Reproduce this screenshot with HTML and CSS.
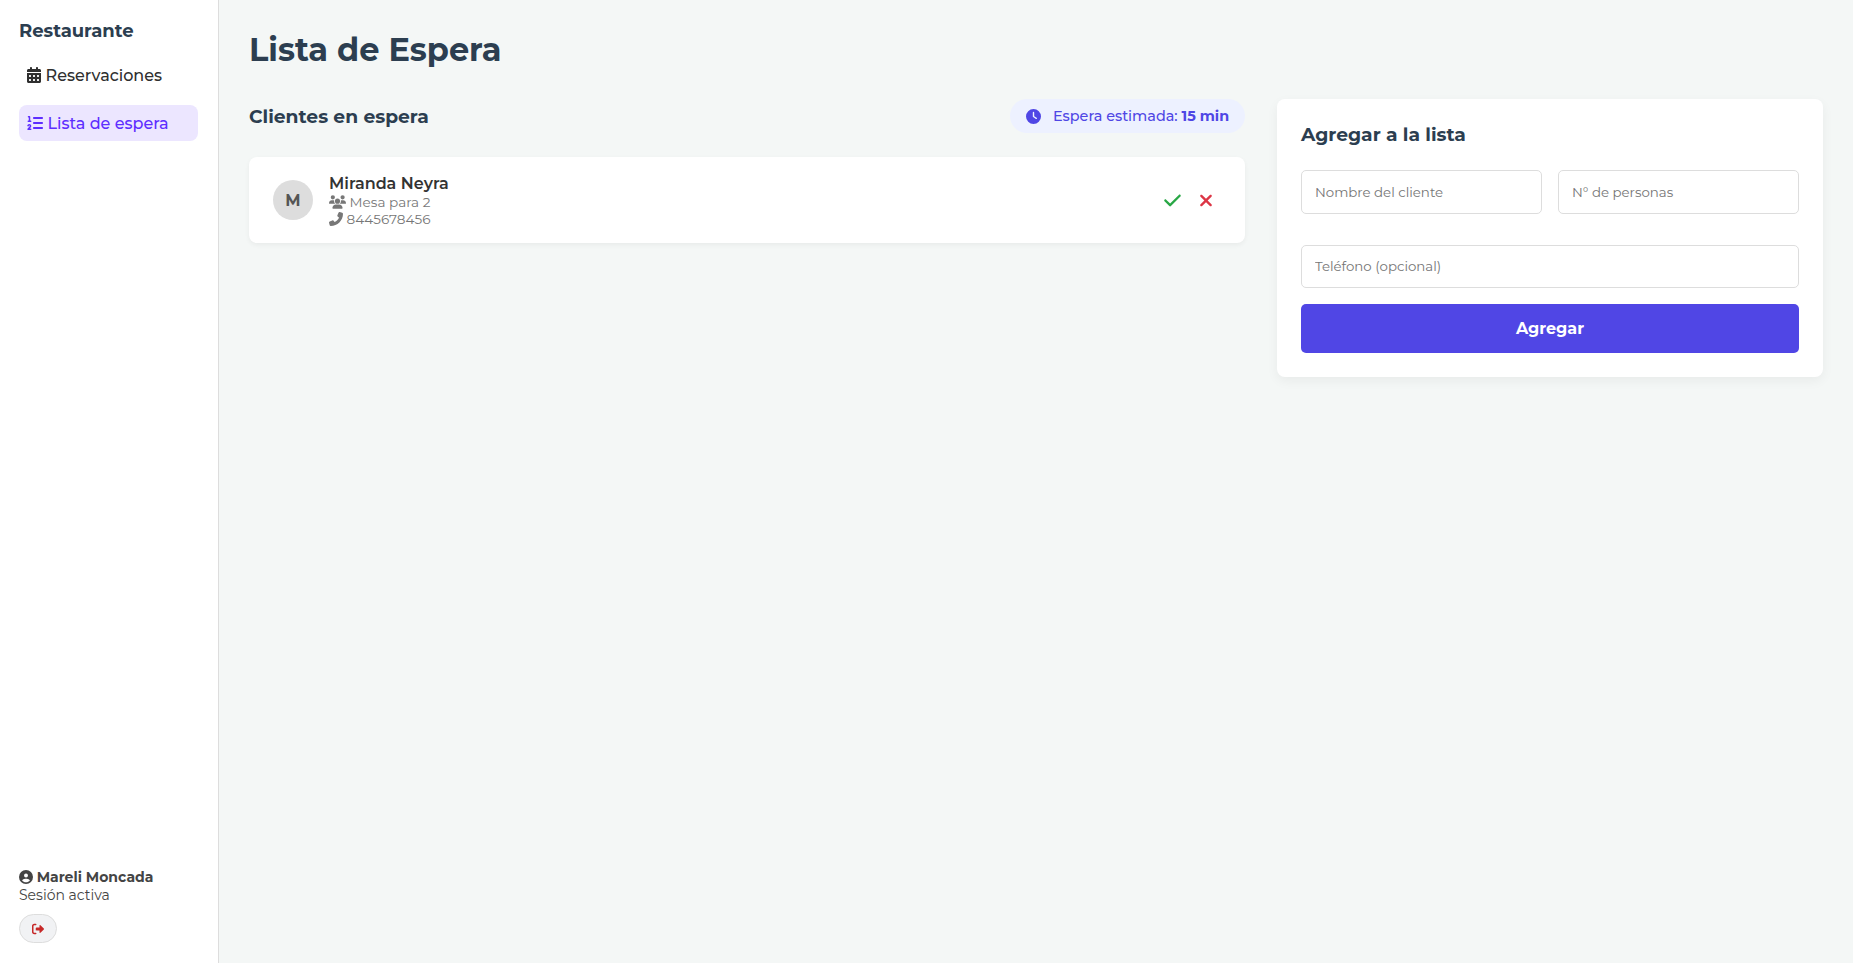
FILE: index.html
```html
<!DOCTYPE html>
<html lang="es">
<head>
<meta charset="utf-8">
<title>Lista de Espera</title>
<link rel="stylesheet" href="styles.css">
</head>
<body>
<div class="app">
  <aside class="sidebar">
    <h2 class="brand"><span>Restaurante</span></h2>
    <nav class="menu">
      <a class="menu-item">
        <svg class="icon-cal" viewBox="0 0 448 512"><path d="M128 0c17.700 0 32 14.300 32 32v32h128V32c0-17.700 14.300-32 32-32s32 14.300 32 32v32h48c26.500 0 48 21.500 48 48v48H0v-48c0-26.500 21.500-48 48-48h48V32c0-17.700 14.300-32 32-32zM0 192h448v272c0 26.500-21.500 48-48 48H48c-26.500 0-48-21.500-48-48V192zm64 80v32c0 8.800 7.200 16 16 16h32c8.800 0 16-7.200 16-16v-32c0-8.800-7.200-16-16-16H80c-8.800 0-16 7.200-16 16zm128 0v32c0 8.800 7.200 16 16 16h32c8.800 0 16-7.200 16-16v-32c0-8.800-7.200-16-16-16h-32c-8.800 0-16 7.200-16 16zm144-16c-8.800 0-16 7.200-16 16v32c0 8.800 7.200 16 16 16h32c8.800 0 16-7.200 16-16v-32c0-8.800-7.200-16-16-16h-32zM64 400v32c0 8.800 7.200 16 16 16h32c8.800 0 16-7.200 16-16v-32c0-8.800-7.200-16-16-16H80c-8.800 0-16 7.200-16 16zm144-16c-8.800 0-16 7.200-16 16v32c0 8.800 7.200 16 16 16h32c8.800 0 16-7.200 16-16v-32c0-8.800-7.200-16-16-16h-32zm112 16v32c0 8.800 7.200 16 16 16h32c8.800 0 16-7.200 16-16v-32c0-8.800-7.200-16-16-16h-32c-8.800 0-16 7.200-16 16z"/></svg>
        <span>Reservaciones</span>
      </a>
      <a class="menu-item active">
        <svg class="icon-list" viewBox="0 0 512 512"><path d="M24 56c0-13.300 10.700-24 24-24h32c13.300 0 24 10.700 24 24v120h16c13.300 0 24 10.700 24 24s-10.700 24-24 24H40c-13.300 0-24-10.700-24-24s10.700-24 24-24h16V80h-8c-13.300 0-24-10.700-24-24zm62.700 285.200c-6.500-7.400-18.300-6.900-24 1.200l-11.100 15.500c-7.700 10.800-22.700 13.300-33.500 5.600s-13.300-22.700-5.600-33.500l11.100-15.500c23.700-33.200 72.300-35.600 99.200-4.900 21.300 24.400 20.800 60.900-1.100 84.700L86.800 432H120c13.300 0 24 10.700 24 24s-10.700 24-24 24H32c-9.500 0-18.200-5.600-22-14.400s-2.100-18.900 4.300-25.900l72-78c5.300-5.800 5.400-14.600.3-20.500zM224 64h256c17.700 0 32 14.300 32 32s-14.300 32-32 32H224c-17.700 0-32-14.300-32-32s14.300-32 32-32zm0 160h256c17.700 0 32 14.300 32 32s-14.300 32-32 32H224c-17.700 0-32-14.300-32-32s14.300-32 32-32zm0 160h256c17.700 0 32 14.300 32 32s-14.300 32-32 32H224c-17.700 0-32-14.300-32-32s14.300-32 32-32z"/></svg>
        <span>Lista de espera</span>
      </a>
    </nav>
    <footer class="session">
      <div class="user">
        <svg viewBox="0 0 512 512"><path fill-rule="evenodd" d="M256 0a256 256 0 1 1 0 512a256 256 0 1 1 0-512zM399 384.300C376.900 345.800 335.400 320 288 320h-64c-47.400 0-88.900 25.800-111 64.300C148.200 426 199 452 256 452s107.800-26 143-67.700zM256 272a72 72 0 1 0 0-144a72 72 0 1 0 0 144z"/></svg>
        <span>Mareli Moncada</span>
      </div>
      <div class="state"><span>Sesión activa</span></div>
      <button class="logout" aria-label="Salir"><svg viewBox="0 0 512 512"><path d="M505 273c9.400-9.400 9.400-24.600 0-34L361 95c-6.900-6.900-17.200-8.900-26.200-5.200S320 102.300 320 112v80H208c-26.500 0-48 21.500-48 32v64c0 26.500 21.500 32 48 32h112v80c0 9.700 5.800 18.500 14.800 22.200s19.300 1.700 26.200-5.200l144-144zM160 96c17.700 0 32-14.300 32-32s-14.300-32-32-32H96C43 32 0 75 0 128v256c0 53 43 96 96 96h64c17.700 0 32-14.300 32-32s-14.300-32-32-32H96c-17.700 0-32-14.300-32-32V128c0-17.700 14.300-32 32-32h64z"/></svg></button>
    </footer>
  </aside>
  <main class="main">
    <h1 class="title"><span>Lista de Espera</span></h1>
    <div class="columns">
      <section class="waiting">
        <div class="waiting-head">
          <h3 class="subtitle clients"><span>Clientes en espera</span></h3>
          <div class="estimate">
            <svg viewBox="0 0 512 512"><path d="M256 0a256 256 0 1 1 0 512A256 256 0 1 1 256 0zM232 120v136c0 8 4 15.500 10.700 20l96 64c11 7.400 25.900 4.400 33.300-6.700s4.400-25.900-6.700-33.300L280 243.200V120c0-13.300-10.700-24-24-24s-24 10.700-24 24z"/></svg>
            <span class="est-label">Espera estimada: <strong>15 min</strong></span>
          </div>
        </div>
        <article class="client">
          <div class="avatar">M</div>
          <div class="info">
            <div class="name"><span>Miranda Neyra</span></div>
            <div class="detail table"><svg class="icon-users" viewBox="0 0 640 512"><path d="M144 0a80 80 0 1 1 0 160A80 80 0 1 1 144 0zM512 0a80 80 0 1 1 0 160A80 80 0 1 1 512 0zM0 298.700C0 239.800 47.800 192 106.700 192h42.700c15.900 0 31 3.500 44.600 9.700-1.300 7.200-1.900 14.700-1.900 22.300 0 38.200 16.800 72.500 43.300 96H21.300C9.600 320 0 310.400 0 298.700zM405.300 320h-.7c26.600-23.500 43.300-57.800 43.300-96 0-7.600-.7-15-1.900-22.300 13.600-6.300 28.700-9.700 44.600-9.700h42.700C592.200 192 640 239.800 640 298.700c0 11.800-9.600 21.300-21.300 21.300H405.300zM224 224a96 96 0 1 1 192 0a96 96 0 1 1-192 0zM128 485.300C128 411.700 187.700 352 261.300 352h117.300C452.300 352 512 411.700 512 485.300c0 14.700-11.900 26.700-26.700 26.700H154.700c-14.700 0-26.700-11.900-26.700-26.700z"/></svg><span>Mesa para 2</span></div>
            <div class="detail phone"><svg viewBox="0 0 512 512"><path transform="matrix(-1 0 0 1 512 0)" d="M164.900 24.600c-7.700-18.600-28-28.500-47.400-23.200l-88 24C12.100 30.200 0 46 0 64c0 247.400 200.600 448 448 448 18 0 33.800-12.100 38.600-29.500l24-88c5.300-19.400-4.600-39.700-23.200-47.400l-96-40c-16.300-6.800-35.200-2.100-46.300 11.600L304.700 368C234.300 334.700 177.300 277.700 144 207.300L193.300 167c13.700-11.200 18.400-30 11.600-46.300l-40-96z"/></svg><span>8445678456</span></div>
          </div>
          <div class="actions">
            <svg class="ok" viewBox="0 0 448 512"><path d="M438.600 105.400c12.500 12.500 12.500 32.800 0 45.300l-256 256c-12.500 12.500-32.800 12.500-45.300 0l-128-128c-12.500-12.500-12.500-32.800 0-45.300s32.800-12.500 45.300 0L160 338.700l233.400-233.300c12.500-12.500 32.800-12.500 45.300 0z"/></svg>
            <svg class="no" viewBox="0 0 384 512"><path d="M342.600 150.600c12.500-12.500 12.500-32.800 0-45.300s-32.800-12.500-45.300 0L192 210.700 86.600 105.400c-12.500-12.500-32.800-12.500-45.300 0s-12.500 32.800 0 45.300L146.700 256 41.400 361.400c-12.500 12.500-12.500 32.800 0 45.300s32.800 12.500 45.300 0L192 301.300l105.400 105.300c12.500 12.500 32.800 12.500 45.300 0s12.500-32.800 0-45.300L237.300 256l105.300-105.400z"/></svg>
          </div>
        </article>
      </section>
      <section class="form-card">
        <h3 class="subtitle add"><span>Agregar a la lista</span></h3>
        <form class="form">
          <div class="row">
            <input class="f-name" placeholder="Nombre del cliente">
            <input class="f-people" placeholder="N° de personas">
          </div>
          <input class="f-phone" placeholder="Teléfono (opcional)">
          <button class="submit" type="button"><span>Agregar</span></button>
        </form>
      </section>
    </div>
  </main>
</div>
</body>
</html>
```
FILE: styles.css
```css
* { box-sizing: border-box; }
body { margin: 0; font-family: Montserrat, Inter, sans-serif; background: #f4f7f6; color: #2c3e50; }
h1, h2, h3 { margin: 0; }
svg { display: block; fill: currentColor; flex: none; }
span, strong { white-space: nowrap; }
.app { display: flex; height: 963px; }
.sidebar { width: 219px; flex: none; display: flex; flex-direction: column; padding: 19px 20px 20px 19px; background: #fff; border-right: 1px solid #ddd; }
.brand { font-size: 18px; line-height: 24px; font-weight: 700; }
.menu { display: flex; flex-direction: column; gap: 12px; margin-top: 14px; }
.menu-item { display: flex; align-items: center; height: 36px; padding-left: 8px; border-radius: 8px; font-size: 16px; font-weight: 500; color: #2f2f2f; }
.menu-item.active { background: #ece6ff; color: #5e2eff; }
.icon-cal { width: 14px; height: 16px; margin-right: 4.500px; }
.icon-list { width: 16px; height: 16px; margin-right: 4.500px; }
.session { margin-top: auto; color: #444; }
.user { display: flex; align-items: center; gap: 3.700px; height: 18px; font-size: 14px; font-weight: 700; }
.user svg { width: 14px; height: 14px; }
.state { height: 18px; line-height: 18px; font-size: 14px; color: #444; }
.logout { display: flex; align-items: center; justify-content: center; width: 38px; height: 29px; margin-top: 10px; padding: 0; border: 1px solid #ddd; border-radius: 15px; background: #f1f2f4; color: #c62828; }
.logout svg { width: 12px; height: 12px; }
.main { flex: 1; padding: 29px 30px; }
.title { font-size: 32px; line-height: 42px; font-weight: 700; }
.columns { display: grid; grid-template-columns: 1fr 546px; gap: 32px; align-items: start; margin-top: 28px; }
.waiting-head { display: flex; justify-content: space-between; align-items: center; height: 34px; margin-bottom: 24px; }
.subtitle { font-size: 18.72px; line-height: 24px; font-weight: 700; }
.clients { padding-top: 2px; }
.estimate { display: flex; align-items: center; width: 235px; height: 34px; padding: 0 16px; border-radius: 17px; background: #edf1ff; color: #4f46e5; font-size: 14.4px; font-weight: 500; }
.estimate svg { width: 15px; height: 15px; margin-right: 12px; }
.estimate strong { font-weight: 700; }
.client { display: flex; align-items: center; height: 86px; padding: 0 24px; background: #fff; border-radius: 8px; box-shadow: 0 2px 5px rgba(0,0,0,.05); }
.avatar { display: grid; place-items: center; width: 40px; height: 40px; border-radius: 50%; background: #ddd; color: #555; font-size: 16px; font-weight: 700; }
.info { margin-left: 16px; color: #333; }
.name { height: 20px; line-height: 22px; font-size: 16px; font-weight: 600; }
.detail { display: flex; align-items: center; height: 17px; font-size: 13.6px; color: #777; }
.icon-users { width: 17px; height: 14px; margin-right: 3.600px; }
.phone svg { width: 14px; height: 14px; margin-right: 3.600px; }
.actions { display: flex; gap: 18px; margin-left: auto; margin-right: 8px; }
.ok { width: 17px; height: 19px; color: #28a745; }
.no { width: 14px; height: 19px; color: #dc3545; }
.form-card { height: 278px; padding: 24px; background: #fff; border-radius: 8px; box-shadow: 0 4px 12px rgba(0,0,0,.05); }
.form { display: flex; flex-direction: column; margin-top: 23px; }
.row { display: grid; grid-template-columns: 1fr 1fr; gap: 16px; margin-bottom: 31px; }
input { width: 100%; height: 44px; padding: 0 13px; border: 1px solid #ddd; border-radius: 5px; font: 13.333px Montserrat, Inter, sans-serif; background: #fff; }
input::placeholder { color: #757575; opacity: 1; }
.f-phone { height: 43px; padding-bottom: 1px; }
.submit { height: 49px; margin-top: 16px; border: 0; border-radius: 5px; background: #5046e5; color: #fff; font: 700 16px Montserrat, Inter, sans-serif; }
```
